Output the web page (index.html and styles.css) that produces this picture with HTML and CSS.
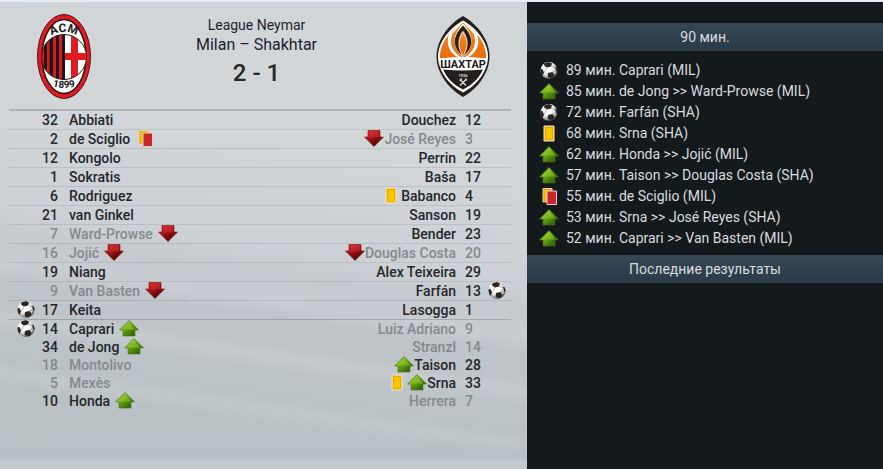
FILE: index.html
```
<!DOCTYPE html>
<html lang="ru">
<head>
    <meta charset="UTF-8">
    <meta name="viewport" content="width=device-width, initial-scale=1.0">
    <title>Milan – Shakhtar</title>
    <link rel="stylesheet" href="styles.css">
</head>
<body>
    <svg class="sprite" aria-hidden="true">
        <defs>
            <linearGradient id="green" x1="0" y1="0" x2="1" y2="1">
                <stop offset="0.2" stop-color="#8fc920"/>
                <stop offset="0.8" stop-color="#346a04"/>
            </linearGradient>
            <linearGradient id="red" x1="0" y1="0" x2="0.6" y2="1">
                <stop offset="0.1" stop-color="#e01f22"/>
                <stop offset="0.9" stop-color="#5f0508"/>
            </linearGradient>
            <radialGradient id="leather" cx="0.4" cy="0.35" r="0.65">
                <stop offset="0.4" stop-color="#ffffff"/>
                <stop offset="0.8" stop-color="#c4c4c4"/>
                <stop offset="1" stop-color="#4c4c4c"/>
            </radialGradient>
            <linearGradient id="flame" x1="0" y1="0" x2="0" y2="1">
                <stop offset="0" stop-color="#f08a2c"/>
                <stop offset="1" stop-color="#ea6a08"/>
            </linearGradient>
            <clipPath id="ball-clip"><circle cx="10" cy="8.5" r="8.5"/></clipPath>
            <clipPath id="milan-clip"><circle cx="27" cy="43" r="22.5"/></clipPath>
            <clipPath id="milan-oval"><ellipse cx="27" cy="42.5" rx="22" ry="37"/></clipPath>
            <clipPath id="shakhtar-clip"><path d="M27 7C15 14 4 27 4 41s11 28 23 34c12-6 23-20 23-34S39 14 27 7z"/></clipPath>
        </defs>
        <symbol id="up" viewBox="0 0 20 17">
            <path d="M10 .5l9.500 9.500H16v6H4v-6H.5z" fill="url(#green)" stroke="#4b6d20" stroke-width=".6"/>
            <path d="M10 1.500L2 9.500h14z" fill="#a8da3c" opacity=".4"/>
        </symbol>
        <symbol id="down" viewBox="0 0 20 17">
            <path d="M4 .5h12V7h3.500L10 16.500.5 7H4z" fill="url(#red)" stroke="#6d1517" stroke-width=".6"/>
            <path d="M5 1h10v6L5 8z" fill="#f04a48" opacity=".3"/>
        </symbol>
        <symbol id="yellow" viewBox="0 0 20 17">
            <path d="M5 1h10v15H5z" fill="#fbc400" stroke="#e9e3cf"/>
            <path d="M6.500 2.500h7v12h-7z" fill="none" stroke="#e2a300" stroke-width=".8"/>
        </symbol>
        <symbol id="second-yellow" viewBox="0 0 20 17">
            <path d="M4 .5h9V14H4z" fill="#fbc400" stroke="#e9d9b0"/>
            <path d="M5 1.500h7V13H5z" fill="none" stroke="#d99e00" stroke-width=".8"/>
            <path d="M8 3h9.500v13.500H8z" fill="#c9252c" stroke="#e8cdce"/>
        </symbol>
        <symbol id="ball" viewBox="0 0 20 17">
            <circle cx="10" cy="8.500" r="8.500" fill="url(#leather)"/>
            <g clip-path="url(#ball-clip)" fill="#2b2623">
                <path d="M5.500 1L10 0l3 1.500-1 3-4 1-3-2z"/>
                <path d="M0 7.500l3.500-.5 1.500 3.500L3.500 14 1 13z"/>
                <path d="M9 11l4.500-1 2 3-2.500 3.500L8.500 15z"/>
                <path d="M16 4.500l3 1.500v4.500l-2-1.500z"/>
                <path d="M8 5.500L5 10.500M12 4.500l4 1M13.500 10l3-1M4 13.500L8.500 15" stroke="#8b8784" stroke-width=".6"/>
            </g>
        </symbol>
    </svg>

    <div class="container">
        <main class="match">
            <header class="match-header">
                <svg class="crest" viewBox="0 0 54 85" role="img" aria-label="Milan">
                    <ellipse cx="27" cy="42.500" rx="26.500" ry="42" fill="#e01b22" stroke="#4a1214"/>
                    <ellipse cx="27" cy="42.500" rx="22" ry="37" fill="#fff" stroke="#271617" stroke-width="1.500"/>
                    <g clip-path="url(#milan-oval)">
                        <g clip-path="url(#milan-clip)">
                            <path d="M4 20h24v46H4z" fill="#d81b22"/>
                            <path d="M7 20h3v46H7zM12.500 20h3.500v46h-3.500zM19 20h3v46h-3zM25 20h3v46h-3z" fill="#1c1718"/>
                            <path d="M28 20h22v46H28z" fill="#fff"/>
                            <path d="M34 20h7v46h-7zM28 39h22v7H28z" fill="#e01b22"/>
                        </g>
                        <circle cx="27" cy="43" r="22.500" fill="none" stroke="#271617"/>
                    </g>
                    <path id="milan-top" d="M12 23Q27 13 42 23" fill="none"/>
                    <path id="milan-bottom" d="M11 71Q27 77 43 71" fill="none"/>
                    <text class="crest-acm"><textPath href="#milan-top" startOffset="50%">ACM</textPath></text>
                    <text class="crest-year"><textPath href="#milan-bottom" startOffset="50%">1899</textPath></text>
                </svg>
                <div class="match-title">
                    <p class="league">League Neymar</p>
                    <h1>Milan – Shakhtar</h1>
                    <p class="score">2 - 1</p>
                </div>
                <svg class="crest" viewBox="0 0 54 82" role="img" aria-label="Shakhtar">
                    <path d="M27 .5C12 9 .5 25 .5 41S12 73 27 81.500C42 73 53.500 57 53.500 41S42 9 27 .5z" fill="#241f1d"/>
                    <path d="M27 5C13 13 2 27 2 41s11 29 25 36c14-7 25-22 25-36S41 13 27 5z" fill="#fff"/>
                    <g clip-path="url(#shakhtar-clip)">
                        <path d="M3 7h48v36H3z" fill="url(#flame)"/>
                        <path d="M15 14C8 27 13 39 25 43h4c12-4 17-16 10-29l-12-9z" fill="#fff"/>
                        <path d="M16.500 18c-4 10 0 19 9.500 24h2c9.500-5 13.500-14 9.500-24L27 7z" fill="url(#flame)"/>
                        <path d="M27 8C17 19 15 30 26 41h2C39 30 37 19 27 8z" fill="#fff"/>
                        <path d="M27 10c-9 9-11 18-4 27l3 3h2l3-3c7-9 5-18-4-27z" fill="#241f1d"/>
                        <path d="M27 15c-6 8-6 17-1 25h2c5-8 5-17-1-25z" fill="#f3c9a4"/>
                        <path d="M27 18c-5 7-4 14-.5 21h1C31 32 32 25 27 18z" fill="url(#flame)"/>
                        <path d="M3 43q24-3 48 0v12H3z" fill="#fff"/>
                        <path d="M7 54q20 2 40 0c-3 8-10 15-20 20C17 69 10 62 7 54z" fill="#241f1d"/>
                    </g>
                    <path d="M24 64l6 6M30 64l-6 6M23.500 65l2.500-2M29 63l2 2" stroke="#ddd" stroke-width="1.300"/>
                    <text class="crest-name" x="27" y="52">ШАХТАР</text>
                    <text class="crest-small" x="27" y="61">1936</text>
                </svg>
            </header>

            <table class="lineups">
                <colgroup>
                    <col class="col-goal-home">
                    <col class="col-num-home">
                    <col>
                    <col>
                    <col class="col-num-away">
                    <col class="col-goal-away">
                </colgroup>
                <tbody class="starters">
                    <tr>
                        <td></td><td>32</td><td>Abbiati</td>
                        <td>Douchez</td><td>12</td><td></td>
                    </tr>
                    <tr>
                        <td></td><td>2</td><td>de Sciglio<svg class="icon"><use href="#second-yellow"/></svg></td>
                        <td class="off"><svg class="icon"><use href="#down"/></svg>José Reyes</td><td class="off">3</td><td></td>
                    </tr>
                    <tr>
                        <td></td><td>12</td><td>Kongolo</td>
                        <td>Perrin</td><td>22</td><td></td>
                    </tr>
                    <tr>
                        <td></td><td>1</td><td>Sokratis</td>
                        <td>Baša</td><td>17</td><td></td>
                    </tr>
                    <tr>
                        <td></td><td>6</td><td>Rodriguez</td>
                        <td><svg class="icon"><use href="#yellow"/></svg>Babanco</td><td>4</td><td></td>
                    </tr>
                    <tr>
                        <td></td><td>21</td><td>van Ginkel</td>
                        <td>Sanson</td><td>19</td><td></td>
                    </tr>
                    <tr>
                        <td></td><td class="off">7</td><td class="off">Ward-Prowse<svg class="icon"><use href="#down"/></svg></td>
                        <td>Bender</td><td>23</td><td></td>
                    </tr>
                    <tr>
                        <td></td><td class="off">16</td><td class="off">Jojić<svg class="icon"><use href="#down"/></svg></td>
                        <td class="off"><svg class="icon"><use href="#down"/></svg>Douglas Costa</td><td class="off">20</td><td></td>
                    </tr>
                    <tr>
                        <td></td><td>19</td><td>Niang</td>
                        <td>Alex Teixeira</td><td>29</td><td></td>
                    </tr>
                    <tr>
                        <td></td><td class="off">9</td><td class="off">Van Basten<svg class="icon"><use href="#down"/></svg></td>
                        <td>Farfán</td><td>13</td><td><svg class="icon"><use href="#ball"/></svg></td>
                    </tr>
                    <tr>
                        <td><svg class="icon"><use href="#ball"/></svg></td><td>17</td><td>Keita</td>
                        <td>Lasogga</td><td>1</td><td></td>
                    </tr>
                </tbody>
                <tbody class="subs">
                    <tr>
                        <td><svg class="icon"><use href="#ball"/></svg></td><td>14</td><td>Caprari<svg class="icon"><use href="#up"/></svg></td>
                        <td class="off">Luiz Adriano</td><td class="off">9</td><td></td>
                    </tr>
                    <tr>
                        <td></td><td>34</td><td>de Jong<svg class="icon"><use href="#up"/></svg></td>
                        <td class="off">Stranzl</td><td class="off">14</td><td></td>
                    </tr>
                    <tr>
                        <td></td><td class="off">18</td><td class="off">Montolivo</td>
                        <td><svg class="icon"><use href="#up"/></svg>Taison</td><td>28</td><td></td>
                    </tr>
                    <tr>
                        <td></td><td class="off">5</td><td class="off">Mexès</td>
                        <td><svg class="icon"><use href="#yellow"/></svg><svg class="icon"><use href="#up"/></svg>Srna</td><td>33</td><td></td>
                    </tr>
                    <tr>
                        <td></td><td>10</td><td>Honda<svg class="icon"><use href="#up"/></svg></td>
                        <td class="off">Herrera</td><td class="off">7</td><td></td>
                    </tr>
                </tbody>
            </table>
        </main>

        <aside class="feed">
            <h2>90 мин.</h2>
            <ul class="events">
                <li><svg class="icon"><use href="#ball"/></svg>89 мин. Caprari (MIL)</li>
                <li><svg class="icon"><use href="#up"/></svg>85 мин. de Jong &gt;&gt; Ward-Prowse (MIL)</li>
                <li><svg class="icon"><use href="#ball"/></svg>72 мин. Farfán (SHA)</li>
                <li><svg class="icon"><use href="#yellow"/></svg>68 мин. Srna (SHA)</li>
                <li><svg class="icon"><use href="#up"/></svg>62 мин. Honda &gt;&gt; Jojić (MIL)</li>
                <li><svg class="icon"><use href="#up"/></svg>57 мин. Taison &gt;&gt; Douglas Costa (SHA)</li>
                <li><svg class="icon"><use href="#second-yellow"/></svg>55 мин. de Sciglio (MIL)</li>
                <li><svg class="icon"><use href="#up"/></svg>53 мин. Srna &gt;&gt; José Reyes (SHA)</li>
                <li><svg class="icon"><use href="#up"/></svg>52 мин. Caprari &gt;&gt; Van Basten (MIL)</li>
            </ul>
            <h2>Последние результаты</h2>
        </aside>
    </div>
</body>
</html>
```
FILE: styles.css
```
* {
    margin: 0;
    padding: 0;
    box-sizing: border-box;
}

body {
    font-family: Roboto, "Liberation Sans", sans-serif;
    font-size: 14px;
    color: #24272b;
    background-color: #14191c;
}

.sprite {
    position: absolute;
    width: 0;
    height: 0;
}

.container {
    display: grid;
    grid-template-columns: 527fr 356fr;
    min-height: 100vh;
    border-top: 2px solid #e6eef5;
}

.icon {
    width: 20px;
    height: 17px;
    flex-shrink: 0;
    vertical-align: middle;
}

/* left side: teams and lineups */
.match {
    padding: 0 16px 0 9px;
    background:
        linear-gradient(to top, #c3cacd 8px, #b7c0c4 11px, rgba(183, 192, 196, 0) 30px),
        linear-gradient(188deg, #d0d5d8 0%, #d2d6d9 30%, #cdd1d5 52%, #c6cace 57%, #c9cdd2 62%, #bfc4c9 65%, #bec4c8 70%, #c4cacd 72%, #bcc3c7 75%, #bbc2c6 80%, #c1c8cb 82%, #b9c1c5 85%, #bac2c6 100%);
}

.match-header {
    display: flex;
    justify-content: space-between;
    align-items: center;
    height: 107px;
    padding: 2px 21px 0 28px;
}

.crest {
    width: 54px;
    height: 85px;
}

.crest text {
    font-weight: 700;
    text-anchor: middle;
    fill: #201b1b;
}

.crest-acm {
    font-size: 12px;
}

.crest-year {
    font-size: 10px;
}

.crest .crest-name {
    font-size: 11px;
}

.crest .crest-small {
    font-size: 4px;
    fill: #ddd;
}

.match-title {
    padding: 0 14px 8px 0;
    text-align: center;
    color: #1d1f2b;
}

.league {
    font-size: 14px;
    line-height: 20px;
}

.match-title h1 {
    font-size: 16px;
    font-weight: 400;
    line-height: 20px;
}

.score {
    font-size: 24px;
    font-weight: 500;
    line-height: 36px;
    color: #24272b;
}

.lineups {
    width: 100%;
    table-layout: fixed;
    border-collapse: separate;
    border-spacing: 0;
    border-top: 2px solid #adb2b5;
    font-weight: 500;
}

.col-goal-home {
    width: 27px;
}

.col-num-home {
    width: 22px;
}

.col-num-away {
    width: 31px;
}

.col-goal-away {
    width: 24px;
}

.lineups td {
    height: 18px;
    line-height: 18px;
    white-space: nowrap;
}

.lineups .icon {
    display: inline-block;
    vertical-align: top;
}

.starters td {
    height: 19px;
    border-bottom: 1px solid rgba(80, 90, 98, 0.15);
}

.starters tr:last-child td {
    border-bottom-color: rgba(80, 90, 98, 0.3);
}

.lineups td:nth-child(1),
.lineups td:nth-child(2),
.lineups td:nth-child(4) {
    text-align: right;
}

.lineups td:nth-child(3) {
    padding-left: 11px;
}

.lineups td:nth-child(3) .icon {
    margin-left: 5px;
}

.lineups td:nth-child(5) {
    padding-left: 9px;
}

.lineups .off {
    color: #85898c;
}

/* right side: match events */
.feed {
    padding-top: 21px;
    background-color: #14191c;
    color: #d9dcde;
}

.feed h2 {
    font-size: 14px;
    font-weight: 400;
    line-height: 28px;
    text-align: center;
    background: linear-gradient(#374753, #2a3a49);
}

.events {
    list-style: none;
    padding: 9px 12px 6px;
}

.events li {
    display: flex;
    align-items: center;
    gap: 7px;
    line-height: 21px;
}

@media (max-width: 640px) {
    .container {
        grid-template-columns: 1fr;
    }
}
```
